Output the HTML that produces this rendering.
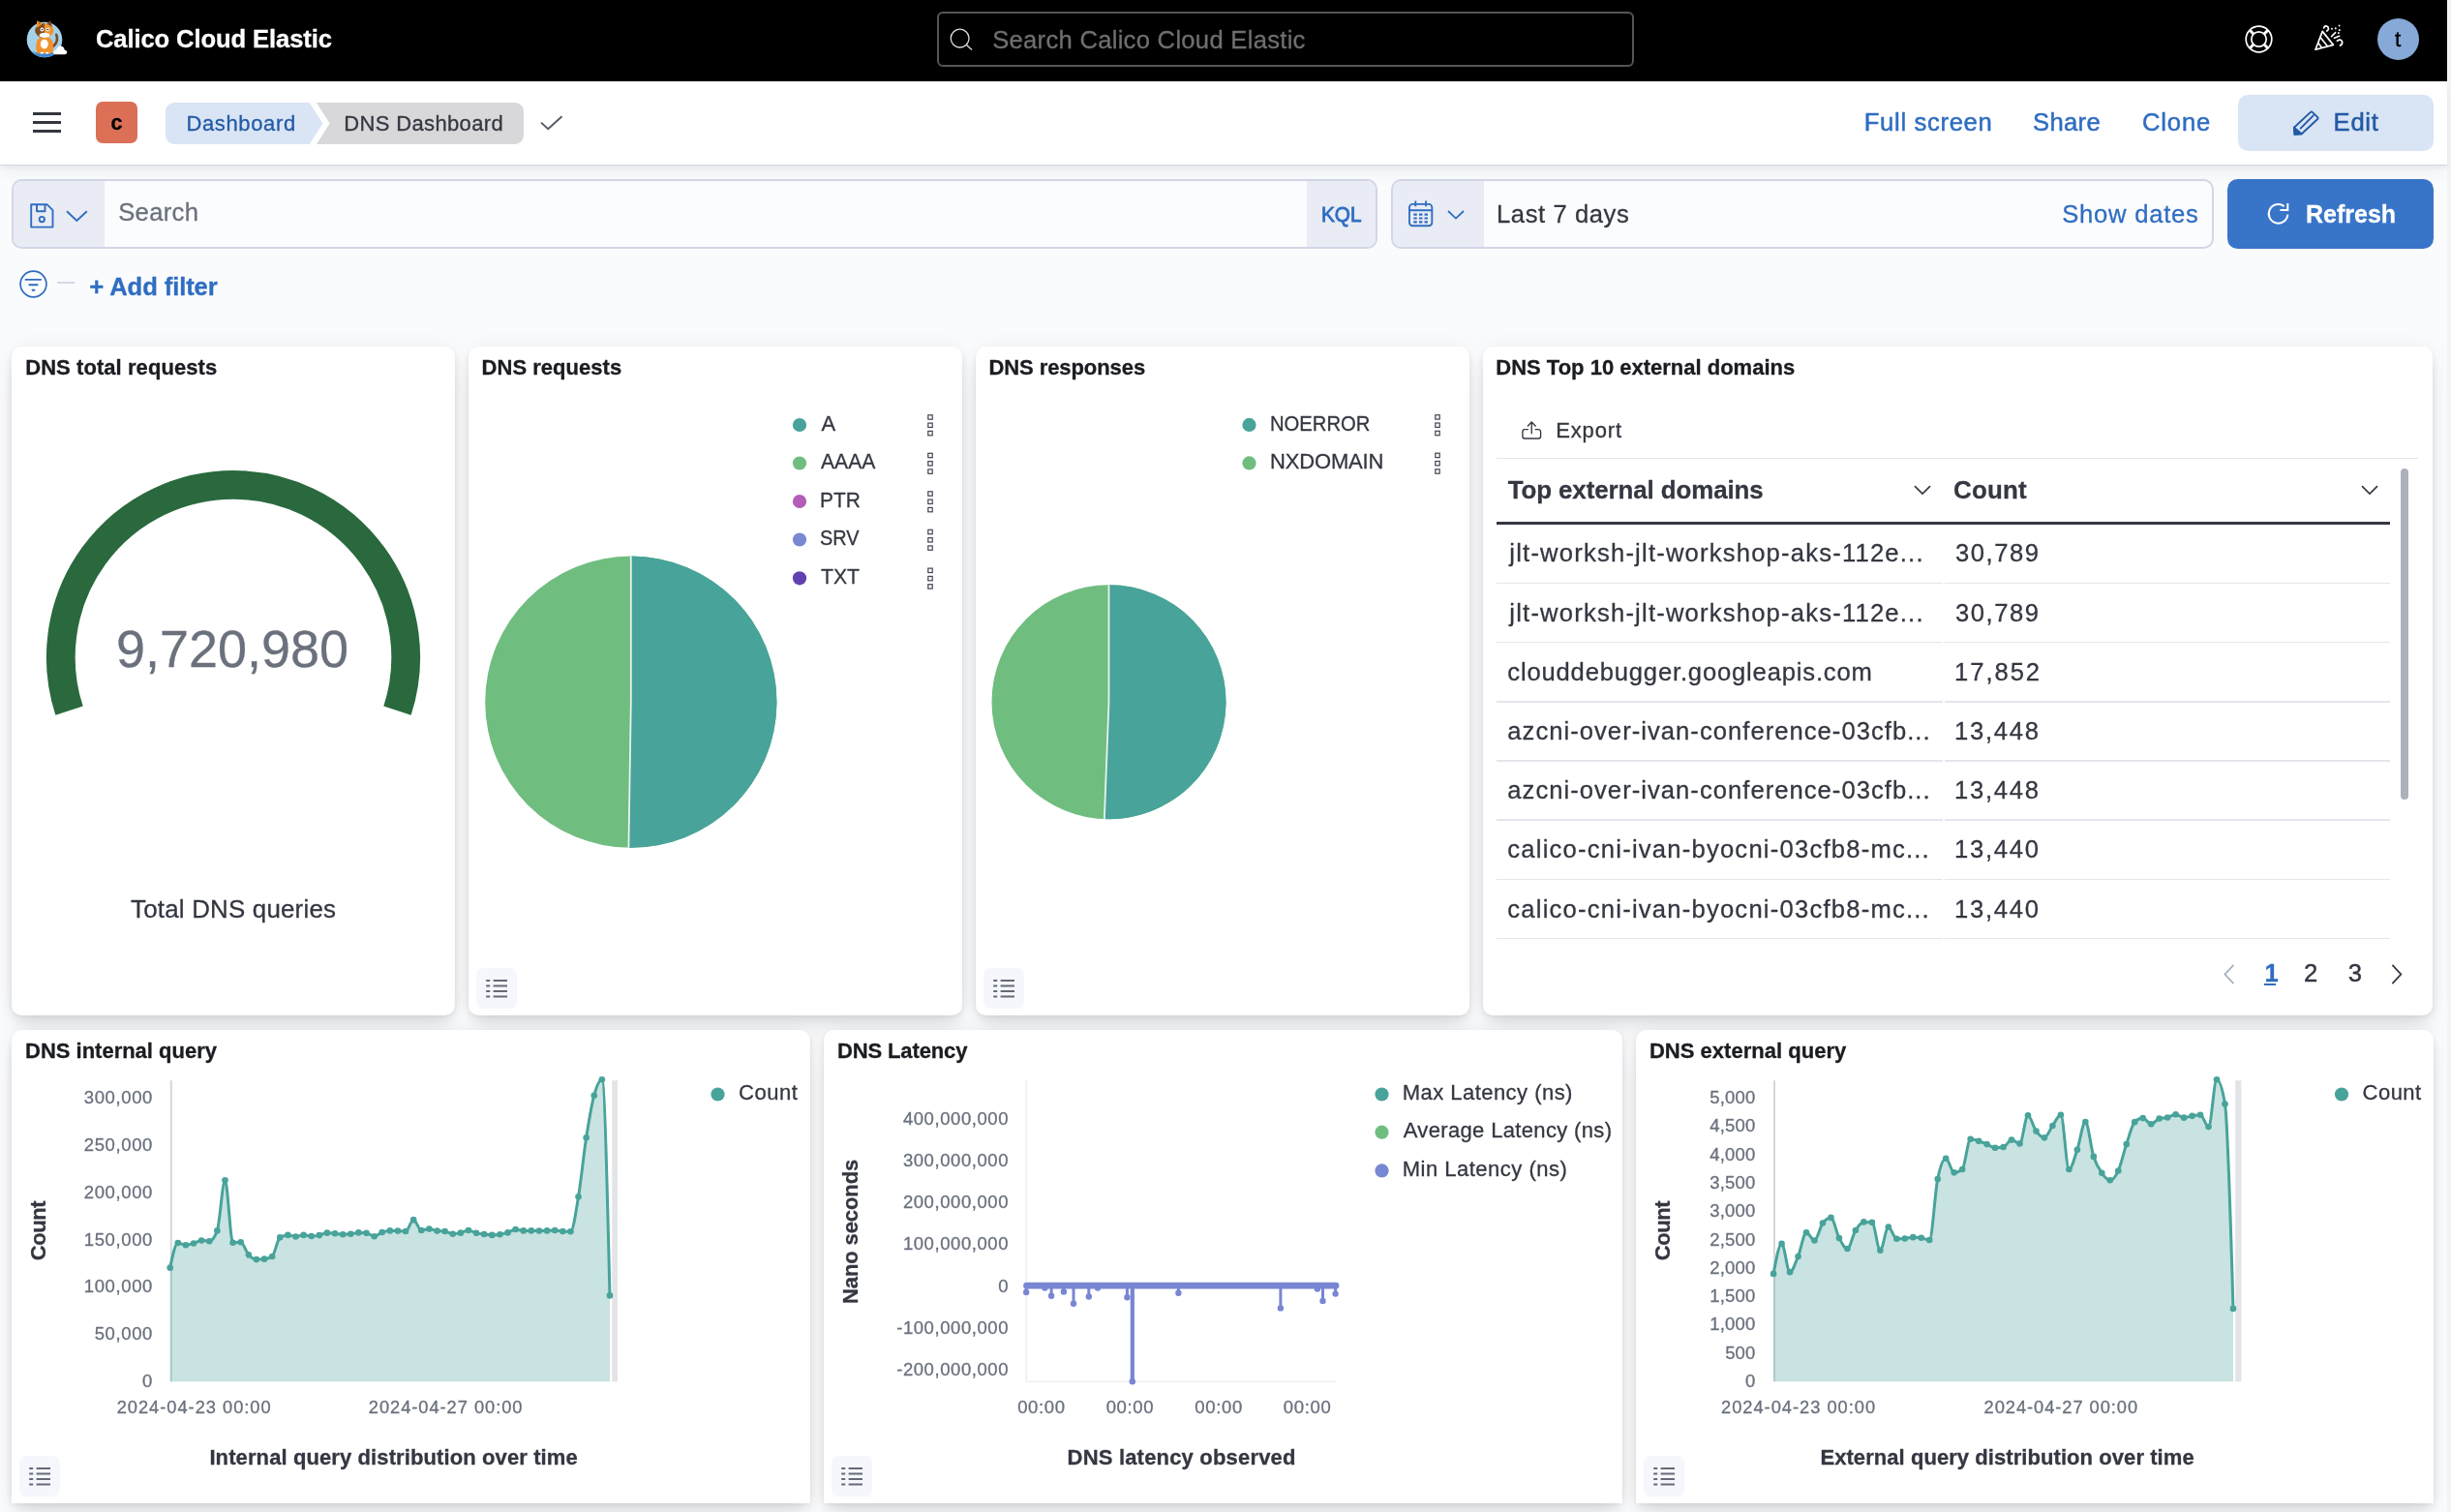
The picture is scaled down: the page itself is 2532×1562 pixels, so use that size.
<!DOCTYPE html><html lang="en"><head><meta charset="utf-8"><title>DNS Dashboard - Calico Cloud Elastic</title><style>
*{box-sizing:border-box;margin:0;padding:0}
html,body{width:2532px;height:1562px;overflow:hidden}
body{position:relative;background:#FAFBFD;font-family:"Liberation Sans",sans-serif;color:#343741;line-height:1}
span{position:absolute;white-space:pre;line-height:1;-webkit-text-stroke-width:.3px}
div{position:absolute}
svg{position:absolute;overflow:visible}
.panel{background:#fff;border-radius:10.5px;box-shadow:0 1.6px 7px -1.75px rgba(0,0,0,.08),0 4.5px 14px -1.75px rgba(0,0,0,.06),0 10px 21px -1.75px rgba(0,0,0,.05),0 26px 26px -1.75px rgba(0,0,0,.04),0 0 24px 0 rgba(0,0,0,.05)}
.lgbtn{width:42px;height:42px;border-radius:7px;background:#F5F7FC}
</style></head><body><div id="root" style="left:0;top:0;width:2532px;height:1562px;will-change:transform">
<div style="left:2528px;top:0;width:4px;height:1562px;background:#F3F4F6"></div>
<div style="left:12px;top:185px;width:1411px;height:71.5px;border:2px solid #D1D7E7;border-radius:10.5px;background:#FBFCFD;overflow:hidden"><div style="left:0;top:0;width:94px;height:100%;background:#E9ECF5"></div><div style="right:0;top:0;width:71px;height:100%;background:#E9ECF5"></div></div>
<svg style="left:31px;top:209.5px" width="25" height="26" viewBox="0 0 25 26" fill="none" stroke="#2F6DC2" stroke-width="1.9" stroke-linejoin="round"><path d="M1.2 1.2H17.5L23.5 7.2V24.6H1.2Z"/><path d="M7 1.2V8.2H15.5V1.2"/><circle cx="12.3" cy="16.6" r="2.7"/></svg>
<svg style="left:68px;top:216.5px" width="23" height="13" viewBox="0 0 23 13" fill="none" stroke="#2F6DC2" stroke-width="2"><path d="M1 1.2L11.3 11L21.8 1.2"/></svg>
<span style="left:122.20px;top:207px;font-size:25.6px;color:#6A717D;letter-spacing:0.328px;">Search</span>
<span style="left:1364.77px;top:211px;font-size:22.4px;color:#2F6DC2;transform-origin:0 0;transform:scaleX(0.9273);-webkit-text-stroke:.9px #2F6DC2;">KQL</span>
<div style="left:1437px;top:185px;width:849.5px;height:71.5px;border:2px solid #D1D7E7;border-radius:10.5px;background:#FBFCFD;overflow:hidden"><div style="left:0;top:0;width:93.5px;height:100%;background:#E9ECF5"></div></div>
<svg style="left:1454.6px;top:207.2px" width="25.3" height="27.3" viewBox="0 0 26 28" fill="none" stroke="#2F6DC2" stroke-width="1.9"><rect x="1" y="4" width="24" height="23" rx="3.5"/><path d="M1 10.5H25M7.5 0.5V6.5M18.5 0.5V6.5"/><path d="M5.5 15H9M11.3 15H14.8M17 15H20.5M5.5 19H9M11.3 19H14.8M17 19H20.5M5.5 23H9M11.3 23H14.8M17 23H20.5" stroke-width="2.2"/></svg>
<svg style="left:1495px;top:216.5px" width="18" height="10" viewBox="0 0 18 10" fill="none" stroke="#2F6DC2" stroke-width="1.8"><path d="M1 1L9 8.6L17 1"/></svg>
<span style="left:1546.00px;top:209px;font-size:25.6px;letter-spacing:0.590px;">Last 7 days</span>
<span style="left:2130.30px;top:209px;font-size:25.6px;color:#2F6DC2;letter-spacing:0.751px;">Show dates</span>
<div style="left:2301px;top:185px;width:213px;height:71.5px;border-radius:10.5px;background:#3875C8"></div>
<svg style="left:2341px;top:208px" width="26" height="26" viewBox="0 0 26 26" fill="none" stroke="#fff" stroke-width="2"><path d="M18.6 5.1A9.8 9.8 0 1 0 22.3 13.6"/><path d="M22.3 2V9H14.4"/></svg>
<span style="left:2382.02px;top:209px;font-size:25.6px;font-weight:700;color:#fff;transform-origin:0 0;transform:scaleX(0.9769);">Refresh</span>
<svg style="left:19.5px;top:279px" width="29" height="29" viewBox="0 0 29 29" fill="none" stroke="#2F6DC2" stroke-width="1.7"><circle cx="14.5" cy="14.5" r="13.4"/><path d="M5.8 9.9H22.8M9.6 15.3H19.4M12.8 20.8H16.2" stroke-width="1.9"/></svg>
<div style="left:59px;top:291px;width:18px;height:2px;background:#D3DAE6"></div>
<span style="left:92.30px;top:284px;font-size:25.6px;font-weight:700;color:#2F6DC2;letter-spacing:-0.093px;">+ Add filter</span>
<div style="left:0;top:84px;width:2528px;height:87px;background:#fff;border-bottom:1px solid #D0D6E2;box-shadow:0 3px 4px rgba(0,0,0,.05),0 8px 14px rgba(0,0,0,.045)"></div>
<div style="left:34px;top:115.5px;width:29px;height:3.3px;background:#343741"></div>
<div style="left:34px;top:124.8px;width:29px;height:3.3px;background:#343741"></div>
<div style="left:34px;top:134.1px;width:29px;height:3.3px;background:#343741"></div>
<div style="left:99px;top:105px;width:43px;height:43px;border-radius:7px;background:#DB7057"></div>
<span style="left:114.40px;top:117px;font-size:21.5px;font-weight:700;color:#000;">c</span>
<svg style="left:171px;top:106px" width="372" height="43" viewBox="0 0 372 43"><path d="M9 0H148.6L162.5 21.5L148.6 43H9A9 9 0 0 1 0 34V9A9 9 0 0 1 9 0Z" fill="#D9E4F5"/><path d="M156 0H361A9 9 0 0 1 370 9V34A9 9 0 0 1 361 43H156L169.6 21.5Z" fill="#D8D8DA"/></svg>
<span style="left:192.40px;top:117px;font-size:22px;color:#235AA5;letter-spacing:0.639px;">Dashboard</span>
<span style="left:355.30px;top:117px;font-size:22px;letter-spacing:0.346px;">DNS Dashboard</span>
<svg style="left:558px;top:119px" width="24" height="16" viewBox="0 0 24 16" fill="none" stroke="#535966" stroke-width="1.9"><path d="M1 7.6L8.2 14.3L22.5 1.2"/></svg>
<span style="left:1925.80px;top:114px;font-size:25.6px;color:#2F6DC2;letter-spacing:0.676px;-webkit-text-stroke:.5px #2F6DC2;">Full screen</span>
<span style="left:2100.00px;top:114px;font-size:25.6px;color:#2F6DC2;letter-spacing:0.360px;-webkit-text-stroke:.5px #2F6DC2;">Share</span>
<span style="left:2213.00px;top:114px;font-size:25.6px;color:#2F6DC2;letter-spacing:0.841px;-webkit-text-stroke:.5px #2F6DC2;">Clone</span>
<div style="left:2312px;top:98px;width:202px;height:57.5px;border-radius:10.5px;background:#D9E4F5"></div>
<svg style="left:2368px;top:113px" width="29" height="28" viewBox="0 0 29 28" fill="none" stroke="#235AA5" stroke-width="1.9" stroke-linejoin="round"><path d="M18.9 2.9Q19.8 2 20.8 2.9L26.2 8.1Q27.2 9.1 26.2 10L9.8 25.3L2.5 25.9L1.9 18.7Z"/><path d="M2 18.8L9.6 25.3L2.5 25.9Z" fill="#235AA5"/><path d="M22.2 5.9L8.1 20.2"/></svg>
<span style="left:2410.60px;top:114px;font-size:25.6px;color:#235AA5;letter-spacing:0.736px;-webkit-text-stroke:.5px #235AA5;">Edit</span>
<div style="left:0;top:0;width:2528px;height:84px;background:#000"></div>
<svg style="left:20px;top:12px" width="60" height="60" viewBox="0 0 60 60">
<circle cx="26" cy="29" r="18.3" fill="#A6D1EC"/>
<path d="M12.3 41A18.3 18.3 0 0 0 39.7 41Q26 44.5 12.3 41Z" fill="#5BA3DE"/>
<ellipse cx="26.3" cy="44" rx="9.6" ry="2.7" fill="#3C86D2"/>
<path d="M35.4 35.6Q40.8 30.5 38.2 23.8" fill="none" stroke="#7A4A22" stroke-width="2.6" stroke-linecap="round"/>
<path d="M18.2 30Q15.8 37 18.6 43.2H33.6Q36.6 37 34 30Q30 25.5 26 25.6Q21.5 25.6 18.2 30Z" fill="#F0932C"/>
<ellipse cx="25.8" cy="19.6" rx="9.6" ry="7.7" fill="#F0932C"/>
<path d="M25.8 11.9A9.6 7.7 0 0 0 25.8 27.3Z" fill="#7C4B25"/>
<path d="M17.6 17L18.3 9.2L24.2 12.6Z" fill="#F0932C"/><path d="M20 13L20.3 11.2L22 12.3Z" fill="#7C4B25"/>
<path d="M28.4 12.6L32 9L34 16Z" fill="#7C4B25"/>
<ellipse cx="26" cy="24.4" rx="5.4" ry="2.7" fill="#fff"/>
<circle cx="23.4" cy="18.5" r="1.9" fill="#fff"/><circle cx="29.4" cy="18.5" r="1.9" fill="#E8EEF2"/>
<circle cx="23.4" cy="18.5" r=".8" fill="#222"/><circle cx="29.4" cy="18.5" r=".8" fill="#222"/>
<ellipse cx="25.8" cy="33.6" rx="4" ry="4.8" fill="#fff"/>
<ellipse cx="23.4" cy="42.7" rx="1.9" ry=".9" fill="#fff"/><ellipse cx="28.7" cy="42.7" rx="1.9" ry=".9" fill="#fff"/>
<path d="M36.4 44.2Q34.4 43.6 35.2 41.4Q36 39.8 38 39.8Q39.2 35.8 43 35.6Q46.2 36.2 46.6 39.4Q49.6 40 49.2 42.6Q48.8 44.2 47 44.2Z" fill="#fff"/>
</svg>
<span style="left:98.90px;top:28px;font-size:25.6px;font-weight:700;color:#fff;letter-spacing:-0.106px;">Calico Cloud Elastic</span>
<div style="left:968px;top:12px;width:719.5px;height:56.5px;border:2px solid #555;border-radius:6px"></div>
<svg style="left:981px;top:29px" width="24" height="24" viewBox="0 0 24 24" fill="none" stroke="#E0E0E0" stroke-width="1.3"><circle cx="10.6" cy="10.6" r="9.4"/><path d="M17.2 17.2L23 22.6"/></svg>
<span style="left:1025.20px;top:29px;font-size:25.6px;color:#6F6F6F;letter-spacing:0.285px;">Search Calico Cloud Elastic</span>
<svg style="left:2319px;top:26px" width="29" height="29" viewBox="0 0 29 29" fill="none" stroke="#fff" stroke-width="1.7"><circle cx="14.5" cy="14.5" r="13.3"/><circle cx="14.5" cy="14.5" r="7.7"/><path d="M5.2 5.2L9.2 9.2M23.8 5.2L19.8 9.2M5.2 23.8L9.2 19.8M23.8 23.8L19.8 19.8" stroke-width="3"/></svg>
<svg style="left:2390px;top:25px" width="32" height="28" viewBox="0 0 32 28" fill="none" stroke="#fff" stroke-width="1.7" stroke-linejoin="round" stroke-linecap="round"><path d="M9.2 7.4L20.4 21.4L2 26.2Z"/><path d="M7 13.6L14.4 22.8M5 19.4L8.4 24.2" stroke-width="1.6"/><path d="M10.6 3.8Q12 0.6 14.6 2.6Q16.6 5 13.8 7" stroke-width="1.7"/><path d="M24.4 17.2Q28 14.6 29.6 18Q30 21 27.4 22" stroke-width="1.7"/><path d="M18.6 12.6L22.6 8.6M21.4 14.2L26.6 12.2" stroke-width="1.6"/><path d="M19 4.6V4.8M22.8 4.2V4.4M26.6 1.4V1.6M26.8 6V6.2M25.8 9V9.2" stroke-width="1.8"/></svg>
<div style="left:2456px;top:19px;width:43px;height:43px;border-radius:50%;background:#86A9D8"></div>
<span style="left:2473.90px;top:30px;font-size:22.5px;color:#000;-webkit-text-stroke:.4px #000;">t</span>
<div class="panel" style="left:12.00px;top:358px;width:457.75px;height:691px;border-radius:10.5px"></div>
<div class="panel" style="left:483.75px;top:358px;width:510.17px;height:691px;border-radius:10.5px"></div>
<div class="panel" style="left:1007.92px;top:358px;width:510.17px;height:691px;border-radius:10.5px"></div>
<div class="panel" style="left:1532.08px;top:358px;width:981.12px;height:691px;border-radius:10.5px"></div>
<div class="panel" style="left:12.00px;top:1064px;width:824.80px;height:489px;border-radius:10.5px 10.5px 0 0"></div>
<div class="panel" style="left:851.00px;top:1064px;width:824.90px;height:489px;border-radius:10.5px 10.5px 0 0"></div>
<div class="panel" style="left:1690.00px;top:1064px;width:824.00px;height:489px;border-radius:10.5px 10.5px 0 0"></div>
<span style="left:26.20px;top:369px;font-size:22px;font-weight:700;color:#1A1C21;letter-spacing:0.066px;">DNS total requests</span>
<span style="left:497.60px;top:369px;font-size:22px;font-weight:700;color:#1A1C21;letter-spacing:0.024px;">DNS requests</span>
<span style="left:1021.40px;top:369px;font-size:22px;font-weight:700;color:#1A1C21;letter-spacing:-0.073px;">DNS responses</span>
<span style="left:1545.30px;top:369px;font-size:22px;font-weight:700;color:#1A1C21;">DNS Top 10 external domains</span>
<span style="left:26.00px;top:1075px;font-size:22px;font-weight:700;color:#1A1C21;letter-spacing:-0.006px;">DNS internal query</span>
<span style="left:865.00px;top:1075px;font-size:22px;font-weight:700;color:#1A1C21;letter-spacing:-0.127px;">DNS Latency</span>
<span style="left:1703.90px;top:1075px;font-size:22px;font-weight:700;color:#1A1C21;letter-spacing:0.028px;">DNS external query</span>
<svg style="left:491.5px;top:999.5px" width="42" height="42" viewBox="0 0 42 42"><rect width="42" height="42" rx="7" fill="#F5F7FC"/><path d="M10.2 13H14.2M17.6 13H32M10.2 18.5H14.2M17.6 18.5H32M10.2 24H14.2M17.6 24H32M10.2 29.5H14.2M17.6 29.5H32" stroke="#646A77" stroke-width="1.9" fill="none"/></svg>
<svg style="left:1015.6px;top:999.5px" width="42" height="42" viewBox="0 0 42 42"><rect width="42" height="42" rx="7" fill="#F5F7FC"/><path d="M10.2 13H14.2M17.6 13H32M10.2 18.5H14.2M17.6 18.5H32M10.2 24H14.2M17.6 24H32M10.2 29.5H14.2M17.6 29.5H32" stroke="#646A77" stroke-width="1.9" fill="none"/></svg>
<svg style="left:20.3px;top:1503.5px" width="42" height="42" viewBox="0 0 42 42"><rect width="42" height="42" rx="7" fill="#F5F7FC"/><path d="M10.2 13H14.2M17.6 13H32M10.2 18.5H14.2M17.6 18.5H32M10.2 24H14.2M17.6 24H32M10.2 29.5H14.2M17.6 29.5H32" stroke="#646A77" stroke-width="1.9" fill="none"/></svg>
<svg style="left:859px;top:1503.5px" width="42" height="42" viewBox="0 0 42 42"><rect width="42" height="42" rx="7" fill="#F5F7FC"/><path d="M10.2 13H14.2M17.6 13H32M10.2 18.5H14.2M17.6 18.5H32M10.2 24H14.2M17.6 24H32M10.2 29.5H14.2M17.6 29.5H32" stroke="#646A77" stroke-width="1.9" fill="none"/></svg>
<svg style="left:1697.6px;top:1503.5px" width="42" height="42" viewBox="0 0 42 42"><rect width="42" height="42" rx="7" fill="#F5F7FC"/><path d="M10.2 13H14.2M17.6 13H32M10.2 18.5H14.2M17.6 18.5H32M10.2 24H14.2M17.6 24H32M10.2 29.5H14.2M17.6 29.5H32" stroke="#646A77" stroke-width="1.9" fill="none"/></svg>
<svg style="left:0;top:0" width="480" height="1060"><path d="M71.52,734.17A178.2,178.2 0 1 1 410.48,734.17" fill="none" stroke="#29693D" stroke-width="29.8"/></svg>
<span style="left:120.22px;top:644px;font-size:54.5px;color:#6A717D;transform-origin:0 0;transform:scaleX(0.9898);">9,720,980</span>
<span style="left:135.10px;top:927px;font-size:25.9px;letter-spacing:0.199px;">Total DNS queries</span>
<svg style="left:0;top:0" width="2532" height="1060"><circle cx="651.8" cy="725.2" r="150.6" fill="#70BD80"/><path d="M651.8,725.2L651.8,574.6A150.6,150.6 0 1 1 649.43,875.78Z" fill="#48A39A"/><path d="M651.8,574.6L651.8,725.2L649.43,875.78" stroke="#fff" stroke-width="1.8" fill="none" stroke-opacity=".85"/></svg>
<svg style="left:0;top:0" width="2532" height="1060"><circle cx="1145.5" cy="725.2" r="121" fill="#70BD80"/><path d="M1145.5,725.2L1145.5,604.2A121,121 0 1 1 1140.86,846.11Z" fill="#48A39A"/><path d="M1145.5,604.2L1145.5,725.2L1140.86,846.11" stroke="#fff" stroke-width="1.8" fill="none" stroke-opacity=".85"/></svg>
<svg style="left:0;top:0" width="2532" height="1562"><circle cx="826" cy="439" r="7.1" fill="#48A39A"/><rect x="958.8" y="428.8" width="4.4" height="4.4" fill="none" stroke="#40444F" stroke-width="1.2"/><rect x="958.8" y="437.1" width="4.4" height="4.4" fill="none" stroke="#40444F" stroke-width="1.2"/><rect x="958.8" y="445.4" width="4.4" height="4.4" fill="none" stroke="#40444F" stroke-width="1.2"/><circle cx="826" cy="478.5" r="7.1" fill="#70BD80"/><rect x="958.8" y="468.3" width="4.4" height="4.4" fill="none" stroke="#40444F" stroke-width="1.2"/><rect x="958.8" y="476.6" width="4.4" height="4.4" fill="none" stroke="#40444F" stroke-width="1.2"/><rect x="958.8" y="484.9" width="4.4" height="4.4" fill="none" stroke="#40444F" stroke-width="1.2"/><circle cx="826" cy="518" r="7.1" fill="#B35DB9"/><rect x="958.8" y="507.8" width="4.4" height="4.4" fill="none" stroke="#40444F" stroke-width="1.2"/><rect x="958.8" y="516.1" width="4.4" height="4.4" fill="none" stroke="#40444F" stroke-width="1.2"/><rect x="958.8" y="524.4" width="4.4" height="4.4" fill="none" stroke="#40444F" stroke-width="1.2"/><circle cx="826" cy="557.5" r="7.1" fill="#7888D2"/><rect x="958.8" y="547.3" width="4.4" height="4.4" fill="none" stroke="#40444F" stroke-width="1.2"/><rect x="958.8" y="555.6" width="4.4" height="4.4" fill="none" stroke="#40444F" stroke-width="1.2"/><rect x="958.8" y="563.9" width="4.4" height="4.4" fill="none" stroke="#40444F" stroke-width="1.2"/><circle cx="826" cy="597.3" r="7.1" fill="#6340AF"/><rect x="958.8" y="587.1" width="4.4" height="4.4" fill="none" stroke="#40444F" stroke-width="1.2"/><rect x="958.8" y="595.4" width="4.4" height="4.4" fill="none" stroke="#40444F" stroke-width="1.2"/><rect x="958.8" y="603.7" width="4.4" height="4.4" fill="none" stroke="#40444F" stroke-width="1.2"/></svg>
<span style="left:848.40px;top:427px;font-size:22px;">A</span>
<span style="left:848.40px;top:466px;font-size:22px;transform-origin:0 0;transform:scaleX(0.9607);">AAAA</span>
<span style="left:847.45px;top:506px;font-size:22px;transform-origin:0 0;transform:scaleX(0.9498);">PTR</span>
<span style="left:847.49px;top:545px;font-size:22px;transform-origin:0 0;transform:scaleX(0.9057);">SRV</span>
<span style="left:848.40px;top:585px;font-size:22px;transform-origin:0 0;transform:scaleX(0.9632);">TXT</span>
<svg style="left:0;top:0" width="2532" height="1562"><circle cx="1290.5" cy="438.9" r="7.1" fill="#48A39A"/><rect x="1482.8" y="428.7" width="4.4" height="4.4" fill="none" stroke="#40444F" stroke-width="1.2"/><rect x="1482.8" y="437.0" width="4.4" height="4.4" fill="none" stroke="#40444F" stroke-width="1.2"/><rect x="1482.8" y="445.3" width="4.4" height="4.4" fill="none" stroke="#40444F" stroke-width="1.2"/><circle cx="1290.5" cy="478.4" r="7.1" fill="#70BD80"/><rect x="1482.8" y="468.2" width="4.4" height="4.4" fill="none" stroke="#40444F" stroke-width="1.2"/><rect x="1482.8" y="476.5" width="4.4" height="4.4" fill="none" stroke="#40444F" stroke-width="1.2"/><rect x="1482.8" y="484.8" width="4.4" height="4.4" fill="none" stroke="#40444F" stroke-width="1.2"/></svg>
<span style="left:1312.18px;top:427px;font-size:22px;transform-origin:0 0;transform:scaleX(0.9198);">NOERROR</span>
<span style="left:1312.10px;top:466px;font-size:22px;letter-spacing:-0.182px;">NXDOMAIN</span>
<svg style="left:1572.4px;top:434.8px" width="20.7" height="18.9" viewBox="0 0 23 21" fill="none" stroke="#343741" stroke-width="1.5" stroke-linejoin="round"><path d="M7.6 9.6H3.4Q1 9.8 1 12.2V17.6Q1 20 3.4 20H19.4Q21.8 20 21.8 17.6V12.2Q21.6 9.8 19.4 9.6H15.2"/><path d="M11.4 14.6V1.6M6.6 6.2L11.4 1.2L16.2 6.2"/></svg>
<span style="left:1607.20px;top:434px;font-size:22px;letter-spacing:0.846px;-webkit-text-stroke:.35px #343741;">Export</span>
<div style="left:1546.3px;top:472.5px;width:951.4px;height:1.75px;background:#E3E6EC"></div>
<span style="left:1557.70px;top:494px;font-size:25.9px;font-weight:700;letter-spacing:-0.088px;">Top external domains</span>
<span style="left:2018.10px;top:494px;font-size:25.9px;font-weight:700;letter-spacing:0.164px;">Count</span>
<svg style="left:1977.2px;top:500.5px" width="18" height="11" viewBox="0 0 18 11" fill="none" stroke="#343741" stroke-width="1.7"><path d="M1 1.2L9 9L17 1.2"/></svg>
<svg style="left:2439px;top:500.5px" width="18" height="11" viewBox="0 0 18 11" fill="none" stroke="#343741" stroke-width="1.7"><path d="M1 1.2L9 9L17 1.2"/></svg>
<div style="left:1546.3px;top:539px;width:922.4px;height:3px;background:#343741"></div>
<div style="left:1546.3px;top:601.5px;width:461px;height:1.75px;background:#E3E6EC"></div>
<div style="left:2008.5px;top:601.5px;width:460.2px;height:1.75px;background:#E3E6EC"></div>
<span style="left:1559.30px;top:559px;font-size:25.6px;letter-spacing:1.201px;">jlt-worksh-jlt-workshop-aks-112e...</span>
<span style="left:2020.10px;top:559px;font-size:25.6px;letter-spacing:1.531px;">30,789</span>
<div style="left:1546.3px;top:662.7px;width:461px;height:1.75px;background:#E3E6EC"></div>
<div style="left:2008.5px;top:662.7px;width:460.2px;height:1.75px;background:#E3E6EC"></div>
<span style="left:1559.30px;top:621px;font-size:25.6px;letter-spacing:1.201px;">jlt-worksh-jlt-workshop-aks-112e...</span>
<span style="left:2020.10px;top:621px;font-size:25.6px;letter-spacing:1.531px;">30,789</span>
<div style="left:1546.3px;top:723.9px;width:461px;height:1.75px;background:#E3E6EC"></div>
<div style="left:2008.5px;top:723.9px;width:460.2px;height:1.75px;background:#E3E6EC"></div>
<span style="left:1557.30px;top:682px;font-size:25.6px;letter-spacing:0.822px;">clouddebugger.googleapis.com</span>
<span style="left:2019.10px;top:682px;font-size:25.6px;letter-spacing:1.931px;">17,852</span>
<div style="left:1546.3px;top:785.1px;width:461px;height:1.75px;background:#E3E6EC"></div>
<div style="left:2008.5px;top:785.1px;width:460.2px;height:1.75px;background:#E3E6EC"></div>
<span style="left:1557.30px;top:743px;font-size:25.6px;letter-spacing:1.034px;">azcni-over-ivan-conference-03cfb...</span>
<span style="left:2019.10px;top:743px;font-size:25.6px;letter-spacing:1.731px;">13,448</span>
<div style="left:1546.3px;top:846.3px;width:461px;height:1.75px;background:#E3E6EC"></div>
<div style="left:2008.5px;top:846.3px;width:460.2px;height:1.75px;background:#E3E6EC"></div>
<span style="left:1557.30px;top:804px;font-size:25.6px;letter-spacing:1.034px;">azcni-over-ivan-conference-03cfb...</span>
<span style="left:2019.10px;top:804px;font-size:25.6px;letter-spacing:1.731px;">13,448</span>
<div style="left:1546.3px;top:907.5px;width:461px;height:1.75px;background:#E3E6EC"></div>
<div style="left:2008.5px;top:907.5px;width:460.2px;height:1.75px;background:#E3E6EC"></div>
<span style="left:1557.30px;top:865px;font-size:25.6px;letter-spacing:1.218px;">calico-cni-ivan-byocni-03cfb8-mc...</span>
<span style="left:2019.10px;top:865px;font-size:25.6px;letter-spacing:1.731px;">13,440</span>
<div style="left:1546.3px;top:968.7px;width:461px;height:1.75px;background:#E3E6EC"></div>
<div style="left:2008.5px;top:968.7px;width:460.2px;height:1.75px;background:#E3E6EC"></div>
<span style="left:1557.30px;top:927px;font-size:25.6px;letter-spacing:1.218px;">calico-cni-ivan-byocni-03cfb8-mc...</span>
<span style="left:2019.10px;top:927px;font-size:25.6px;letter-spacing:1.731px;">13,440</span>
<div style="left:2479.6px;top:484.3px;width:8.2px;height:341.5px;border-radius:4.1px;background:#ACB0BA"></div>
<svg style="left:2297.2px;top:995.6px" width="12" height="21" viewBox="0 0 12 21" fill="none" stroke="#A8B0C2" stroke-width="1.8"><path d="M10.4 0.8L1.5 10.5L10.4 20.2"/></svg>
<svg style="left:2470.4px;top:995.6px" width="12" height="21" viewBox="0 0 12 21" fill="none" stroke="#343741" stroke-width="1.8"><path d="M1.4 0.8L10.3 10.5L1.4 20.2"/></svg>
<span style="left:2339.50px;top:993px;font-size:25.6px;font-weight:700;color:#2F6DC2;">1</span>
<div style="left:2339px;top:1016px;width:12.2px;height:2px;background:#2F6DC2"></div>
<span style="left:2380.00px;top:993px;font-size:25.6px;-webkit-text-stroke:.4px #343741;">2</span>
<span style="left:2425.80px;top:993px;font-size:25.6px;-webkit-text-stroke:.4px #343741;">3</span>
<svg style="left:0;top:0" width="2532" height="1562"><rect x="632.3" y="1116.2" width="5.7000000000000455" height="311.0999999999999" fill="#E3E4E8"/><rect x="175.8" y="1116.2" width="2" height="311.0999999999999" fill="#D6D7DD"/><path d="M175.70,1309.63C178.40,1296.81,181.11,1283.99,183.81,1283.99C186.52,1283.99,189.22,1286.23,191.92,1286.23C194.63,1286.23,197.33,1285.22,200.04,1284.44C202.74,1283.65,205.44,1281.51,208.15,1281.51C210.85,1281.51,213.56,1282.19,216.26,1282.19C218.96,1282.19,221.67,1278.59,224.37,1271.39C227.08,1264.19,229.78,1219.21,232.48,1219.21C235.19,1219.21,237.89,1283.76,240.60,1283.76C243.30,1283.76,246.00,1283.31,248.71,1283.31C251.41,1283.31,254.12,1293.39,256.82,1296.36C259.52,1299.32,262.23,1301.08,264.93,1301.08C267.64,1301.08,270.34,1300.93,273.04,1300.63C275.75,1300.33,278.45,1299.73,281.16,1297.93C283.86,1296.13,286.56,1280.01,289.27,1278.36C291.97,1276.71,294.68,1275.89,297.38,1275.89C300.08,1275.89,302.79,1277.46,305.49,1277.46C308.20,1277.46,310.90,1275.89,313.60,1275.89C316.31,1275.89,319.01,1277.01,321.72,1277.01C324.42,1277.01,327.12,1276.68,329.83,1276.11C332.53,1275.55,335.24,1273.64,337.94,1273.64C340.64,1273.64,343.35,1274.05,346.05,1274.31C348.76,1274.58,351.46,1275.21,354.16,1275.21C356.87,1275.21,359.57,1275.06,362.28,1274.76C364.98,1274.46,367.68,1273.41,370.39,1273.41C373.09,1273.41,375.80,1273.56,378.50,1273.86C381.20,1274.16,383.91,1277.24,386.61,1277.24C389.32,1277.24,392.02,1273.94,394.72,1272.96C397.43,1271.99,400.13,1271.39,402.84,1271.39C405.54,1271.39,408.24,1271.50,410.95,1271.61C413.65,1271.73,416.36,1272.06,419.06,1272.06C421.76,1272.06,424.47,1260.14,427.17,1260.14C429.88,1260.14,432.58,1270.94,435.28,1270.94C437.99,1270.94,440.69,1269.59,443.40,1269.59C446.10,1269.59,448.80,1271.32,451.51,1271.61C454.21,1271.91,456.92,1271.76,459.62,1272.06C462.32,1272.36,465.03,1274.76,467.73,1274.76C470.44,1274.76,473.14,1274.28,475.84,1273.64C478.55,1273.00,481.25,1270.94,483.96,1270.94C486.66,1270.94,489.36,1273.19,492.07,1273.86C494.77,1274.54,497.48,1274.65,500.18,1274.99C502.88,1275.33,505.59,1275.89,508.29,1275.89C511.00,1275.89,513.70,1275.63,516.40,1275.21C519.11,1274.80,521.81,1274.28,524.52,1273.41C527.22,1272.55,529.92,1270.04,532.63,1270.04C535.33,1270.04,538.04,1271.39,540.74,1271.39C543.44,1271.39,546.15,1271.39,548.85,1271.39C551.56,1271.39,554.26,1271.61,556.96,1271.61C559.67,1271.61,562.37,1271.50,565.08,1271.39C567.78,1271.28,570.48,1270.94,573.19,1270.94C575.89,1270.94,578.60,1271.91,581.30,1272.06C584.00,1272.21,586.71,1272.29,589.41,1272.29C592.12,1272.29,594.82,1252.46,597.52,1236.30C600.23,1220.15,602.93,1192.78,605.64,1175.35C608.34,1157.92,611.04,1141.72,613.75,1131.71C616.45,1121.70,619.16,1115.29,621.86,1115.29C624.56,1115.29,627.27,1226.86,629.97,1338.42L629.97,1427.3L175.70,1427.3Z" fill="#48A39A" fill-opacity=".3"/><path d="M175.70,1309.63C178.40,1296.81,181.11,1283.99,183.81,1283.99C186.52,1283.99,189.22,1286.23,191.92,1286.23C194.63,1286.23,197.33,1285.22,200.04,1284.44C202.74,1283.65,205.44,1281.51,208.15,1281.51C210.85,1281.51,213.56,1282.19,216.26,1282.19C218.96,1282.19,221.67,1278.59,224.37,1271.39C227.08,1264.19,229.78,1219.21,232.48,1219.21C235.19,1219.21,237.89,1283.76,240.60,1283.76C243.30,1283.76,246.00,1283.31,248.71,1283.31C251.41,1283.31,254.12,1293.39,256.82,1296.36C259.52,1299.32,262.23,1301.08,264.93,1301.08C267.64,1301.08,270.34,1300.93,273.04,1300.63C275.75,1300.33,278.45,1299.73,281.16,1297.93C283.86,1296.13,286.56,1280.01,289.27,1278.36C291.97,1276.71,294.68,1275.89,297.38,1275.89C300.08,1275.89,302.79,1277.46,305.49,1277.46C308.20,1277.46,310.90,1275.89,313.60,1275.89C316.31,1275.89,319.01,1277.01,321.72,1277.01C324.42,1277.01,327.12,1276.68,329.83,1276.11C332.53,1275.55,335.24,1273.64,337.94,1273.64C340.64,1273.64,343.35,1274.05,346.05,1274.31C348.76,1274.58,351.46,1275.21,354.16,1275.21C356.87,1275.21,359.57,1275.06,362.28,1274.76C364.98,1274.46,367.68,1273.41,370.39,1273.41C373.09,1273.41,375.80,1273.56,378.50,1273.86C381.20,1274.16,383.91,1277.24,386.61,1277.24C389.32,1277.24,392.02,1273.94,394.72,1272.96C397.43,1271.99,400.13,1271.39,402.84,1271.39C405.54,1271.39,408.24,1271.50,410.95,1271.61C413.65,1271.73,416.36,1272.06,419.06,1272.06C421.76,1272.06,424.47,1260.14,427.17,1260.14C429.88,1260.14,432.58,1270.94,435.28,1270.94C437.99,1270.94,440.69,1269.59,443.40,1269.59C446.10,1269.59,448.80,1271.32,451.51,1271.61C454.21,1271.91,456.92,1271.76,459.62,1272.06C462.32,1272.36,465.03,1274.76,467.73,1274.76C470.44,1274.76,473.14,1274.28,475.84,1273.64C478.55,1273.00,481.25,1270.94,483.96,1270.94C486.66,1270.94,489.36,1273.19,492.07,1273.86C494.77,1274.54,497.48,1274.65,500.18,1274.99C502.88,1275.33,505.59,1275.89,508.29,1275.89C511.00,1275.89,513.70,1275.63,516.40,1275.21C519.11,1274.80,521.81,1274.28,524.52,1273.41C527.22,1272.55,529.92,1270.04,532.63,1270.04C535.33,1270.04,538.04,1271.39,540.74,1271.39C543.44,1271.39,546.15,1271.39,548.85,1271.39C551.56,1271.39,554.26,1271.61,556.96,1271.61C559.67,1271.61,562.37,1271.50,565.08,1271.39C567.78,1271.28,570.48,1270.94,573.19,1270.94C575.89,1270.94,578.60,1271.91,581.30,1272.06C584.00,1272.21,586.71,1272.29,589.41,1272.29C592.12,1272.29,594.82,1252.46,597.52,1236.30C600.23,1220.15,602.93,1192.78,605.64,1175.35C608.34,1157.92,611.04,1141.72,613.75,1131.71C616.45,1121.70,619.16,1115.29,621.86,1115.29C624.56,1115.29,627.27,1226.86,629.97,1338.42" fill="none" stroke="#48A39A" stroke-width="3" stroke-linejoin="round" stroke-linecap="round"/><circle cx="175.70" cy="1309.63" r="3.3" fill="#48A39A"/><circle cx="183.81" cy="1283.99" r="3.3" fill="#48A39A"/><circle cx="191.92" cy="1286.23" r="3.3" fill="#48A39A"/><circle cx="200.04" cy="1284.44" r="3.3" fill="#48A39A"/><circle cx="208.15" cy="1281.51" r="3.3" fill="#48A39A"/><circle cx="216.26" cy="1282.19" r="3.3" fill="#48A39A"/><circle cx="224.37" cy="1271.39" r="3.3" fill="#48A39A"/><circle cx="232.48" cy="1219.21" r="3.3" fill="#48A39A"/><circle cx="240.60" cy="1283.76" r="3.3" fill="#48A39A"/><circle cx="248.71" cy="1283.31" r="3.3" fill="#48A39A"/><circle cx="256.82" cy="1296.36" r="3.3" fill="#48A39A"/><circle cx="264.93" cy="1301.08" r="3.3" fill="#48A39A"/><circle cx="273.04" cy="1300.63" r="3.3" fill="#48A39A"/><circle cx="281.16" cy="1297.93" r="3.3" fill="#48A39A"/><circle cx="289.27" cy="1278.36" r="3.3" fill="#48A39A"/><circle cx="297.38" cy="1275.89" r="3.3" fill="#48A39A"/><circle cx="305.49" cy="1277.46" r="3.3" fill="#48A39A"/><circle cx="313.60" cy="1275.89" r="3.3" fill="#48A39A"/><circle cx="321.72" cy="1277.01" r="3.3" fill="#48A39A"/><circle cx="329.83" cy="1276.11" r="3.3" fill="#48A39A"/><circle cx="337.94" cy="1273.64" r="3.3" fill="#48A39A"/><circle cx="346.05" cy="1274.31" r="3.3" fill="#48A39A"/><circle cx="354.16" cy="1275.21" r="3.3" fill="#48A39A"/><circle cx="362.28" cy="1274.76" r="3.3" fill="#48A39A"/><circle cx="370.39" cy="1273.41" r="3.3" fill="#48A39A"/><circle cx="378.50" cy="1273.86" r="3.3" fill="#48A39A"/><circle cx="386.61" cy="1277.24" r="3.3" fill="#48A39A"/><circle cx="394.72" cy="1272.96" r="3.3" fill="#48A39A"/><circle cx="402.84" cy="1271.39" r="3.3" fill="#48A39A"/><circle cx="410.95" cy="1271.61" r="3.3" fill="#48A39A"/><circle cx="419.06" cy="1272.06" r="3.3" fill="#48A39A"/><circle cx="427.17" cy="1260.14" r="3.3" fill="#48A39A"/><circle cx="435.28" cy="1270.94" r="3.3" fill="#48A39A"/><circle cx="443.40" cy="1269.59" r="3.3" fill="#48A39A"/><circle cx="451.51" cy="1271.61" r="3.3" fill="#48A39A"/><circle cx="459.62" cy="1272.06" r="3.3" fill="#48A39A"/><circle cx="467.73" cy="1274.76" r="3.3" fill="#48A39A"/><circle cx="475.84" cy="1273.64" r="3.3" fill="#48A39A"/><circle cx="483.96" cy="1270.94" r="3.3" fill="#48A39A"/><circle cx="492.07" cy="1273.86" r="3.3" fill="#48A39A"/><circle cx="500.18" cy="1274.99" r="3.3" fill="#48A39A"/><circle cx="508.29" cy="1275.89" r="3.3" fill="#48A39A"/><circle cx="516.40" cy="1275.21" r="3.3" fill="#48A39A"/><circle cx="524.52" cy="1273.41" r="3.3" fill="#48A39A"/><circle cx="532.63" cy="1270.04" r="3.3" fill="#48A39A"/><circle cx="540.74" cy="1271.39" r="3.3" fill="#48A39A"/><circle cx="548.85" cy="1271.39" r="3.3" fill="#48A39A"/><circle cx="556.96" cy="1271.61" r="3.3" fill="#48A39A"/><circle cx="565.08" cy="1271.39" r="3.3" fill="#48A39A"/><circle cx="573.19" cy="1270.94" r="3.3" fill="#48A39A"/><circle cx="581.30" cy="1272.06" r="3.3" fill="#48A39A"/><circle cx="589.41" cy="1272.29" r="3.3" fill="#48A39A"/><circle cx="597.52" cy="1236.30" r="3.3" fill="#48A39A"/><circle cx="605.64" cy="1175.35" r="3.3" fill="#48A39A"/><circle cx="613.75" cy="1131.71" r="3.3" fill="#48A39A"/><circle cx="621.86" cy="1115.29" r="3.3" fill="#48A39A"/><circle cx="629.97" cy="1338.42" r="3.3" fill="#48A39A"/></svg>
<span style="left:86.80px;top:1125px;font-size:18.5px;color:#69707D;letter-spacing:0.619px;">300,000</span>
<span style="left:86.80px;top:1174px;font-size:18.5px;color:#69707D;letter-spacing:0.619px;">250,000</span>
<span style="left:86.80px;top:1223px;font-size:18.5px;color:#69707D;letter-spacing:0.619px;">200,000</span>
<span style="left:86.80px;top:1272px;font-size:18.5px;color:#69707D;letter-spacing:0.619px;">150,000</span>
<span style="left:86.80px;top:1320px;font-size:18.5px;color:#69707D;letter-spacing:0.619px;">100,000</span>
<span style="left:97.71px;top:1369px;font-size:18.5px;color:#69707D;letter-spacing:0.619px;">50,000</span>
<span style="left:147.10px;top:1418px;font-size:18.5px;color:#69707D;letter-spacing:0.619px;">0</span>
<span style="left:120.70px;top:1445px;font-size:18.3px;color:#69707D;letter-spacing:0.975px;">2024-04-23 00:00</span>
<span style="left:380.80px;top:1445px;font-size:18.3px;color:#69707D;letter-spacing:0.955px;">2024-04-27 00:00</span>
<div style="position:absolute;left:39.50px;top:1271.20px;width:0;height:0;transform:rotate(-90deg)"><span style="left:-31.25px;top:-11.06px;font-size:22px;font-weight:700;letter-spacing:-0.426px;">Count</span></div>
<span style="left:216.40px;top:1495px;font-size:22px;font-weight:700;letter-spacing:0.106px;">Internal query distribution over time</span>
<svg style="left:0;top:0" width="2532" height="1562"><circle cx="741.5" cy="1130.5" r="7.1" fill="#48A39A"/><circle cx="2419" cy="1130.5" r="7.1" fill="#48A39A"/><circle cx="1427.5" cy="1130.5" r="7.1" fill="#48A39A"/><circle cx="1427.5" cy="1169.7" r="7.1" fill="#70BD80"/><circle cx="1427.5" cy="1209.4" r="7.1" fill="#7888D2"/></svg>
<span style="left:763.00px;top:1118px;font-size:22px;letter-spacing:0.527px;">Count</span>
<svg style="left:0;top:0" width="2532" height="1562"><rect x="2309.2" y="1116.2" width="6.200000000000273" height="311.0999999999999" fill="#E3E4E8"/><rect x="1832.0" y="1116.2" width="2" height="311.0999999999999" fill="#D6D7DD"/><path d="M1832.10,1315.92C1834.93,1300.40,1837.75,1284.89,1840.58,1284.89C1843.41,1284.89,1846.23,1314.13,1849.06,1314.13C1851.89,1314.13,1854.71,1304.75,1857.54,1297.93C1860.37,1291.11,1863.19,1273.19,1866.02,1273.19C1868.85,1273.19,1871.67,1281.51,1874.50,1281.51C1877.33,1281.51,1880.15,1267.27,1882.98,1263.52C1885.81,1259.77,1888.63,1257.89,1891.46,1257.89C1894.29,1257.89,1897.11,1273.68,1899.94,1279.04C1902.77,1284.40,1905.59,1290.06,1908.42,1290.06C1911.25,1290.06,1914.07,1275.55,1916.90,1270.94C1919.73,1266.33,1922.55,1262.39,1925.38,1262.39C1928.21,1262.39,1931.03,1262.54,1933.86,1262.84C1936.69,1263.14,1939.51,1291.63,1942.34,1291.63C1945.17,1291.63,1947.99,1267.57,1950.82,1267.57C1953.65,1267.57,1956.47,1279.71,1959.30,1279.71C1962.13,1279.71,1964.95,1279.64,1967.78,1279.49C1970.61,1279.34,1973.43,1278.14,1976.26,1278.14C1979.09,1278.14,1981.91,1278.36,1984.74,1278.81C1987.57,1279.26,1990.39,1281.06,1993.22,1281.06C1996.05,1281.06,1998.87,1232.14,2001.70,1218.08C2004.53,1204.03,2007.35,1196.72,2010.18,1196.72C2013.01,1196.72,2015.83,1211.34,2018.66,1211.34C2021.49,1211.34,2024.31,1210.21,2027.14,1207.96C2029.97,1205.71,2032.79,1176.70,2035.62,1176.70C2038.45,1176.70,2041.27,1177.82,2044.10,1178.72C2046.93,1179.62,2049.75,1180.93,2052.58,1182.10C2055.41,1183.26,2058.23,1185.70,2061.06,1185.70C2063.89,1185.70,2066.71,1185.47,2069.54,1185.02C2072.37,1184.57,2075.19,1177.60,2078.02,1177.60C2080.85,1177.60,2083.67,1181.42,2086.50,1181.42C2089.33,1181.42,2092.15,1152.18,2094.98,1152.18C2097.81,1152.18,2100.63,1164.74,2103.46,1168.60C2106.29,1172.46,2109.11,1175.35,2111.94,1175.35C2114.77,1175.35,2117.59,1166.91,2120.42,1162.98C2123.25,1159.04,2126.07,1151.73,2128.90,1151.73C2131.73,1151.73,2134.55,1207.96,2137.38,1207.96C2140.21,1207.96,2143.03,1195.89,2145.86,1187.72C2148.69,1179.55,2151.51,1158.93,2154.34,1158.93C2157.17,1158.93,2159.99,1186.11,2162.82,1194.92C2165.65,1203.73,2168.47,1207.74,2171.30,1211.79C2174.13,1215.83,2176.95,1219.21,2179.78,1219.21C2182.61,1219.21,2185.43,1215.72,2188.26,1209.54C2191.09,1203.35,2193.91,1190.49,2196.74,1182.10C2199.57,1173.70,2202.39,1161.85,2205.22,1159.15C2208.05,1156.46,2210.87,1155.11,2213.70,1155.11C2216.53,1155.11,2219.35,1161.18,2222.18,1161.18C2225.01,1161.18,2227.83,1156.31,2230.66,1155.56C2233.49,1154.81,2236.31,1155.14,2239.14,1154.43C2241.97,1153.72,2244.79,1151.28,2247.62,1151.28C2250.45,1151.28,2253.27,1154.66,2256.10,1154.66C2258.93,1154.66,2261.75,1153.34,2264.58,1152.86C2267.41,1152.37,2270.23,1151.73,2273.06,1151.73C2275.89,1151.73,2278.71,1164.10,2281.54,1164.10C2284.37,1164.10,2287.19,1115.29,2290.02,1115.29C2292.85,1115.29,2295.67,1123.69,2298.50,1140.49C2301.33,1157.28,2304.15,1254.60,2306.98,1351.91L2306.98,1427.3L1832.10,1427.3Z" fill="#48A39A" fill-opacity=".3"/><path d="M1832.10,1315.92C1834.93,1300.40,1837.75,1284.89,1840.58,1284.89C1843.41,1284.89,1846.23,1314.13,1849.06,1314.13C1851.89,1314.13,1854.71,1304.75,1857.54,1297.93C1860.37,1291.11,1863.19,1273.19,1866.02,1273.19C1868.85,1273.19,1871.67,1281.51,1874.50,1281.51C1877.33,1281.51,1880.15,1267.27,1882.98,1263.52C1885.81,1259.77,1888.63,1257.89,1891.46,1257.89C1894.29,1257.89,1897.11,1273.68,1899.94,1279.04C1902.77,1284.40,1905.59,1290.06,1908.42,1290.06C1911.25,1290.06,1914.07,1275.55,1916.90,1270.94C1919.73,1266.33,1922.55,1262.39,1925.38,1262.39C1928.21,1262.39,1931.03,1262.54,1933.86,1262.84C1936.69,1263.14,1939.51,1291.63,1942.34,1291.63C1945.17,1291.63,1947.99,1267.57,1950.82,1267.57C1953.65,1267.57,1956.47,1279.71,1959.30,1279.71C1962.13,1279.71,1964.95,1279.64,1967.78,1279.49C1970.61,1279.34,1973.43,1278.14,1976.26,1278.14C1979.09,1278.14,1981.91,1278.36,1984.74,1278.81C1987.57,1279.26,1990.39,1281.06,1993.22,1281.06C1996.05,1281.06,1998.87,1232.14,2001.70,1218.08C2004.53,1204.03,2007.35,1196.72,2010.18,1196.72C2013.01,1196.72,2015.83,1211.34,2018.66,1211.34C2021.49,1211.34,2024.31,1210.21,2027.14,1207.96C2029.97,1205.71,2032.79,1176.70,2035.62,1176.70C2038.45,1176.70,2041.27,1177.82,2044.10,1178.72C2046.93,1179.62,2049.75,1180.93,2052.58,1182.10C2055.41,1183.26,2058.23,1185.70,2061.06,1185.70C2063.89,1185.70,2066.71,1185.47,2069.54,1185.02C2072.37,1184.57,2075.19,1177.60,2078.02,1177.60C2080.85,1177.60,2083.67,1181.42,2086.50,1181.42C2089.33,1181.42,2092.15,1152.18,2094.98,1152.18C2097.81,1152.18,2100.63,1164.74,2103.46,1168.60C2106.29,1172.46,2109.11,1175.35,2111.94,1175.35C2114.77,1175.35,2117.59,1166.91,2120.42,1162.98C2123.25,1159.04,2126.07,1151.73,2128.90,1151.73C2131.73,1151.73,2134.55,1207.96,2137.38,1207.96C2140.21,1207.96,2143.03,1195.89,2145.86,1187.72C2148.69,1179.55,2151.51,1158.93,2154.34,1158.93C2157.17,1158.93,2159.99,1186.11,2162.82,1194.92C2165.65,1203.73,2168.47,1207.74,2171.30,1211.79C2174.13,1215.83,2176.95,1219.21,2179.78,1219.21C2182.61,1219.21,2185.43,1215.72,2188.26,1209.54C2191.09,1203.35,2193.91,1190.49,2196.74,1182.10C2199.57,1173.70,2202.39,1161.85,2205.22,1159.15C2208.05,1156.46,2210.87,1155.11,2213.70,1155.11C2216.53,1155.11,2219.35,1161.18,2222.18,1161.18C2225.01,1161.18,2227.83,1156.31,2230.66,1155.56C2233.49,1154.81,2236.31,1155.14,2239.14,1154.43C2241.97,1153.72,2244.79,1151.28,2247.62,1151.28C2250.45,1151.28,2253.27,1154.66,2256.10,1154.66C2258.93,1154.66,2261.75,1153.34,2264.58,1152.86C2267.41,1152.37,2270.23,1151.73,2273.06,1151.73C2275.89,1151.73,2278.71,1164.10,2281.54,1164.10C2284.37,1164.10,2287.19,1115.29,2290.02,1115.29C2292.85,1115.29,2295.67,1123.69,2298.50,1140.49C2301.33,1157.28,2304.15,1254.60,2306.98,1351.91" fill="none" stroke="#48A39A" stroke-width="3" stroke-linejoin="round" stroke-linecap="round"/><circle cx="1832.10" cy="1315.92" r="3.3" fill="#48A39A"/><circle cx="1840.58" cy="1284.89" r="3.3" fill="#48A39A"/><circle cx="1849.06" cy="1314.13" r="3.3" fill="#48A39A"/><circle cx="1857.54" cy="1297.93" r="3.3" fill="#48A39A"/><circle cx="1866.02" cy="1273.19" r="3.3" fill="#48A39A"/><circle cx="1874.50" cy="1281.51" r="3.3" fill="#48A39A"/><circle cx="1882.98" cy="1263.52" r="3.3" fill="#48A39A"/><circle cx="1891.46" cy="1257.89" r="3.3" fill="#48A39A"/><circle cx="1899.94" cy="1279.04" r="3.3" fill="#48A39A"/><circle cx="1908.42" cy="1290.06" r="3.3" fill="#48A39A"/><circle cx="1916.90" cy="1270.94" r="3.3" fill="#48A39A"/><circle cx="1925.38" cy="1262.39" r="3.3" fill="#48A39A"/><circle cx="1933.86" cy="1262.84" r="3.3" fill="#48A39A"/><circle cx="1942.34" cy="1291.63" r="3.3" fill="#48A39A"/><circle cx="1950.82" cy="1267.57" r="3.3" fill="#48A39A"/><circle cx="1959.30" cy="1279.71" r="3.3" fill="#48A39A"/><circle cx="1967.78" cy="1279.49" r="3.3" fill="#48A39A"/><circle cx="1976.26" cy="1278.14" r="3.3" fill="#48A39A"/><circle cx="1984.74" cy="1278.81" r="3.3" fill="#48A39A"/><circle cx="1993.22" cy="1281.06" r="3.3" fill="#48A39A"/><circle cx="2001.70" cy="1218.08" r="3.3" fill="#48A39A"/><circle cx="2010.18" cy="1196.72" r="3.3" fill="#48A39A"/><circle cx="2018.66" cy="1211.34" r="3.3" fill="#48A39A"/><circle cx="2027.14" cy="1207.96" r="3.3" fill="#48A39A"/><circle cx="2035.62" cy="1176.70" r="3.3" fill="#48A39A"/><circle cx="2044.10" cy="1178.72" r="3.3" fill="#48A39A"/><circle cx="2052.58" cy="1182.10" r="3.3" fill="#48A39A"/><circle cx="2061.06" cy="1185.70" r="3.3" fill="#48A39A"/><circle cx="2069.54" cy="1185.02" r="3.3" fill="#48A39A"/><circle cx="2078.02" cy="1177.60" r="3.3" fill="#48A39A"/><circle cx="2086.50" cy="1181.42" r="3.3" fill="#48A39A"/><circle cx="2094.98" cy="1152.18" r="3.3" fill="#48A39A"/><circle cx="2103.46" cy="1168.60" r="3.3" fill="#48A39A"/><circle cx="2111.94" cy="1175.35" r="3.3" fill="#48A39A"/><circle cx="2120.42" cy="1162.98" r="3.3" fill="#48A39A"/><circle cx="2128.90" cy="1151.73" r="3.3" fill="#48A39A"/><circle cx="2137.38" cy="1207.96" r="3.3" fill="#48A39A"/><circle cx="2145.86" cy="1187.72" r="3.3" fill="#48A39A"/><circle cx="2154.34" cy="1158.93" r="3.3" fill="#48A39A"/><circle cx="2162.82" cy="1194.92" r="3.3" fill="#48A39A"/><circle cx="2171.30" cy="1211.79" r="3.3" fill="#48A39A"/><circle cx="2179.78" cy="1219.21" r="3.3" fill="#48A39A"/><circle cx="2188.26" cy="1209.54" r="3.3" fill="#48A39A"/><circle cx="2196.74" cy="1182.10" r="3.3" fill="#48A39A"/><circle cx="2205.22" cy="1159.15" r="3.3" fill="#48A39A"/><circle cx="2213.70" cy="1155.11" r="3.3" fill="#48A39A"/><circle cx="2222.18" cy="1161.18" r="3.3" fill="#48A39A"/><circle cx="2230.66" cy="1155.56" r="3.3" fill="#48A39A"/><circle cx="2239.14" cy="1154.43" r="3.3" fill="#48A39A"/><circle cx="2247.62" cy="1151.28" r="3.3" fill="#48A39A"/><circle cx="2256.10" cy="1154.66" r="3.3" fill="#48A39A"/><circle cx="2264.58" cy="1152.86" r="3.3" fill="#48A39A"/><circle cx="2273.06" cy="1151.73" r="3.3" fill="#48A39A"/><circle cx="2281.54" cy="1164.10" r="3.3" fill="#48A39A"/><circle cx="2290.02" cy="1115.29" r="3.3" fill="#48A39A"/><circle cx="2298.50" cy="1140.49" r="3.3" fill="#48A39A"/><circle cx="2306.98" cy="1351.91" r="3.3" fill="#48A39A"/></svg>
<span style="left:1766.30px;top:1125px;font-size:18.5px;color:#69707D;letter-spacing:0.198px;">5,000</span>
<span style="left:1766.30px;top:1154px;font-size:18.5px;color:#69707D;letter-spacing:0.198px;">4,500</span>
<span style="left:1766.30px;top:1184px;font-size:18.5px;color:#69707D;letter-spacing:0.198px;">4,000</span>
<span style="left:1766.30px;top:1213px;font-size:18.5px;color:#69707D;letter-spacing:0.198px;">3,500</span>
<span style="left:1766.30px;top:1242px;font-size:18.5px;color:#69707D;letter-spacing:0.198px;">3,000</span>
<span style="left:1766.30px;top:1272px;font-size:18.5px;color:#69707D;letter-spacing:0.198px;">2,500</span>
<span style="left:1766.30px;top:1301px;font-size:18.5px;color:#69707D;letter-spacing:0.198px;">2,000</span>
<span style="left:1766.30px;top:1330px;font-size:18.5px;color:#69707D;letter-spacing:0.198px;">1,500</span>
<span style="left:1766.30px;top:1359px;font-size:18.5px;color:#69707D;letter-spacing:0.198px;">1,000</span>
<span style="left:1782.13px;top:1389px;font-size:18.5px;color:#69707D;letter-spacing:0.198px;">500</span>
<span style="left:1803.10px;top:1418px;font-size:18.5px;color:#69707D;letter-spacing:0.198px;">0</span>
<span style="left:1778.00px;top:1445px;font-size:18.3px;color:#69707D;letter-spacing:0.982px;">2024-04-23 00:00</span>
<span style="left:2049.60px;top:1445px;font-size:18.3px;color:#69707D;letter-spacing:0.948px;">2024-04-27 00:00</span>
<div style="position:absolute;left:1717.80px;top:1271.20px;width:0;height:0;transform:rotate(-90deg)"><span style="left:-31.25px;top:-11.06px;font-size:22px;font-weight:700;letter-spacing:-0.426px;">Count</span></div>
<span style="left:1880.40px;top:1495px;font-size:22px;font-weight:700;letter-spacing:0.066px;">External query distribution over time</span>
<span style="left:2440.50px;top:1118px;font-size:22px;letter-spacing:0.502px;">Count</span>
<svg style="left:0;top:0" width="2532" height="1562"><path d="M1060.2,1116.2V1427.2H1380.2" fill="none" stroke="#EEF0F4" stroke-width="1.6"/><path d="M1060.5,1328.2H1380" stroke="#7886D3" stroke-width="6.7" stroke-linecap="round"/><path d="M1060.2,1328V1335" stroke="#7886D3" stroke-width="3"/><circle cx="1060.2" cy="1335" r="3.2" fill="#7886D3"/><path d="M1079.4,1328V1330.5" stroke="#7886D3" stroke-width="3"/><circle cx="1079.4" cy="1330.5" r="3.2" fill="#7886D3"/><path d="M1086.1,1328V1338.8" stroke="#7886D3" stroke-width="3"/><circle cx="1086.1" cy="1338.8" r="3.2" fill="#7886D3"/><path d="M1098.9,1328V1334.5" stroke="#7886D3" stroke-width="3"/><circle cx="1098.9" cy="1334.5" r="3.2" fill="#7886D3"/><path d="M1109,1328V1346.7" stroke="#7886D3" stroke-width="3"/><circle cx="1109" cy="1346.7" r="3.2" fill="#7886D3"/><path d="M1124.8,1328V1339.5" stroke="#7886D3" stroke-width="3"/><circle cx="1124.8" cy="1339.5" r="3.2" fill="#7886D3"/><path d="M1134,1328V1330.5" stroke="#7886D3" stroke-width="3"/><circle cx="1134" cy="1330.5" r="3.2" fill="#7886D3"/><path d="M1164.4,1328V1340.2" stroke="#7886D3" stroke-width="3"/><circle cx="1164.4" cy="1340.2" r="3.2" fill="#7886D3"/><path d="M1169.8,1328V1427.2" stroke="#7886D3" stroke-width="4.2"/><circle cx="1169.8" cy="1427.2" r="3.2" fill="#7886D3"/><path d="M1217.4,1328V1335.7" stroke="#7886D3" stroke-width="3"/><circle cx="1217.4" cy="1335.7" r="3.2" fill="#7886D3"/><path d="M1322.9,1328V1351.4" stroke="#7886D3" stroke-width="3"/><circle cx="1322.9" cy="1351.4" r="3.2" fill="#7886D3"/><path d="M1360.9,1328V1331.6" stroke="#7886D3" stroke-width="3"/><circle cx="1360.9" cy="1331.6" r="3.2" fill="#7886D3"/><path d="M1366.5,1328V1344" stroke="#7886D3" stroke-width="3"/><circle cx="1366.5" cy="1344" r="3.2" fill="#7886D3"/><path d="M1379.6,1328V1336.6" stroke="#7886D3" stroke-width="3"/><circle cx="1379.6" cy="1336.6" r="3.2" fill="#7886D3"/></svg>
<span style="left:932.90px;top:1147px;font-size:18.5px;color:#69707D;letter-spacing:0.571px;">400,000,000</span>
<span style="left:932.90px;top:1190px;font-size:18.5px;color:#69707D;letter-spacing:0.571px;">300,000,000</span>
<span style="left:932.90px;top:1233px;font-size:18.5px;color:#69707D;letter-spacing:0.571px;">200,000,000</span>
<span style="left:932.90px;top:1276px;font-size:18.5px;color:#69707D;letter-spacing:0.571px;">100,000,000</span>
<span style="left:1031.20px;top:1320px;font-size:18.5px;color:#69707D;letter-spacing:0.571px;">0</span>
<span style="left:926.17px;top:1363px;font-size:18.5px;color:#69707D;letter-spacing:0.571px;">-100,000,000</span>
<span style="left:926.17px;top:1406px;font-size:18.5px;color:#69707D;letter-spacing:0.571px;">-200,000,000</span>
<span style="left:1051.20px;top:1445px;font-size:18.5px;color:#69707D;letter-spacing:0.648px;">00:00</span>
<span style="left:1142.70px;top:1445px;font-size:18.5px;color:#69707D;letter-spacing:0.648px;">00:00</span>
<span style="left:1234.30px;top:1445px;font-size:18.5px;color:#69707D;letter-spacing:0.648px;">00:00</span>
<span style="left:1325.80px;top:1445px;font-size:18.5px;color:#69707D;letter-spacing:0.648px;">00:00</span>
<div style="position:absolute;left:879.00px;top:1271.60px;width:0;height:0;transform:rotate(-90deg)"><span style="left:-75.00px;top:-11.06px;font-size:22px;font-weight:700;letter-spacing:-0.103px;">Nano seconds</span></div>
<span style="left:1102.60px;top:1495px;font-size:22px;font-weight:700;letter-spacing:0.186px;">DNS latency observed</span>
<span style="left:1448.70px;top:1118px;font-size:22px;letter-spacing:0.467px;">Max Latency (ns)</span>
<span style="left:1449.70px;top:1157px;font-size:22px;letter-spacing:0.348px;">Average Latency (ns)</span>
<span style="left:1448.70px;top:1197px;font-size:22px;letter-spacing:0.501px;">Min Latency (ns)</span>
</div></body></html>
